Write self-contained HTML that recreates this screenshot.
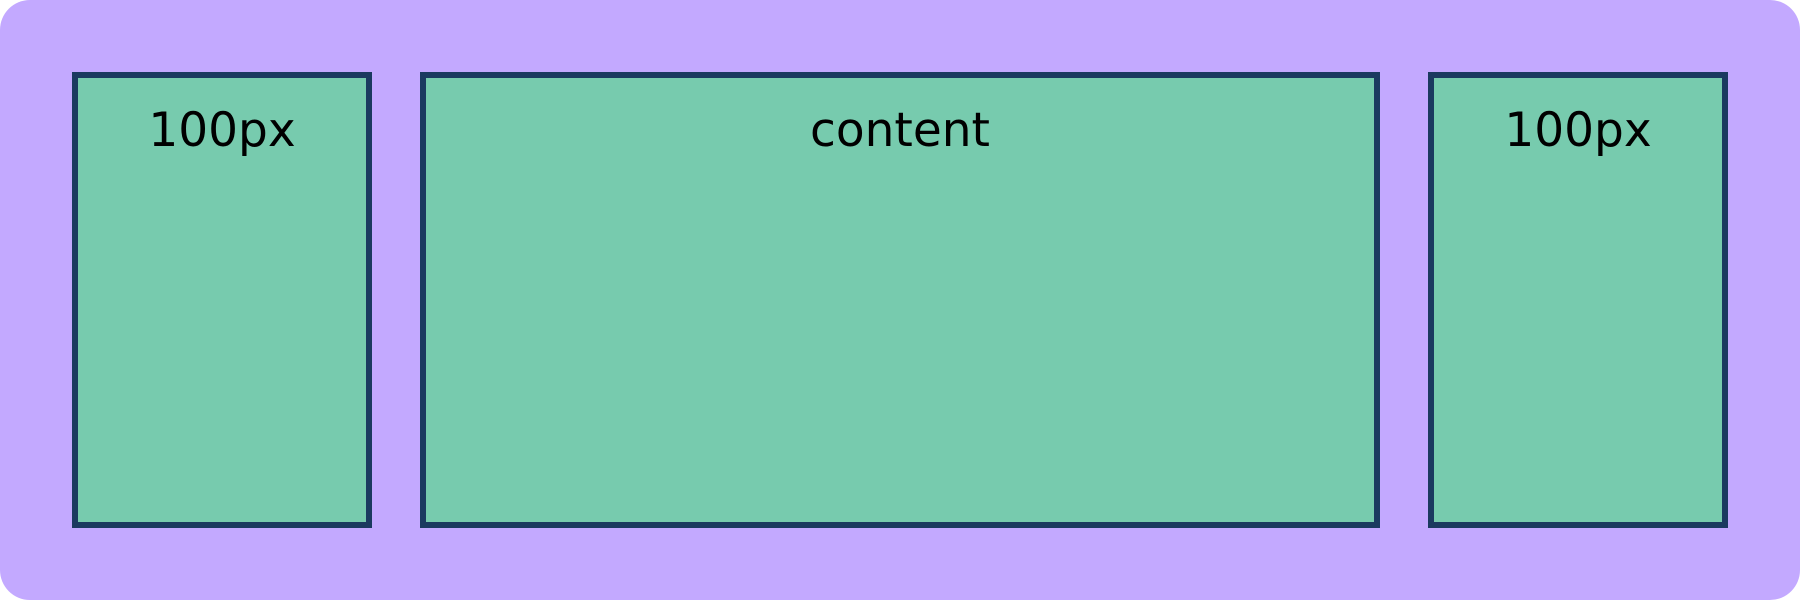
<!DOCTYPE html>
<html><head><style>
html,body{margin:0;padding:0;background:#fff;}
.wrap{position:absolute;left:0;top:0;width:1800px;height:600px;background:#c3a9ff;border-radius:30px;}
.b{position:absolute;top:72px;height:444px;background:#77cbae;border:6px solid #1b3a60;box-sizing:content-box;
font-family:"DejaVu Sans","Liberation Sans",sans-serif;font-size:47px;color:#000;text-align:center;line-height:52px;}
.b span{position:absolute;left:0;right:0;top:27px;}
</style></head><body>
<div class="wrap">
<div class="b" style="left:72px;width:288px;"><span>100px</span></div>
<div class="b" style="left:420px;width:948px;"><span>content</span></div>
<div class="b" style="left:1428px;width:288px;"><span>100px</span></div>
</div>
</body></html>
